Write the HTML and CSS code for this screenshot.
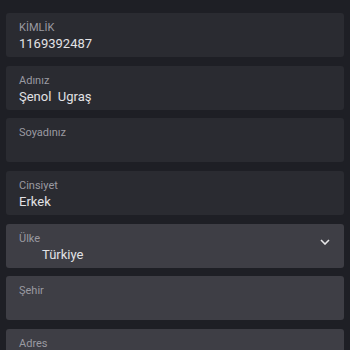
FILE: index.html
```html
<!DOCTYPE html>
<html lang="tr">
<head>
    <meta charset="UTF-8">
    <meta name="viewport" content="width=device-width, initial-scale=1.0">
    <title>Profil</title>
    <link rel="stylesheet" href="styles.css">
</head>
<body>
    <div class="form-list">
        <div class="field">
            <span class="label">KİMLİK</span>
            <span class="value">1169392487</span>
        </div>
        <div class="field">
            <span class="label">Adınız</span>
            <span class="value">Şenol&nbsp; Ugraş</span>
        </div>
        <div class="field">
            <span class="label">Soyadınız</span>
            <span class="value"></span>
        </div>
        <div class="field">
            <span class="label">Cinsiyet</span>
            <span class="value">Erkek</span>
        </div>
        <div class="field field-light field-select">
            <span class="label">Ülke</span>
            <span class="value value-indent">Türkiye</span>
            <svg class="chevron" width="10" height="6" viewBox="0 0 10 6">
                <path d="M1 1 L5 5 L9 1" fill="none" stroke="#e6e6e8" stroke-width="1.6"/>
            </svg>
        </div>
        <div class="field field-light">
            <span class="label">Şehir</span>
            <span class="value"></span>
        </div>
        <div class="field field-light">
            <span class="label">Adres</span>
            <span class="value"></span>
        </div>
    </div>
</body>
</html>
```

FILE: styles.css
```css
* {
    margin: 0;
    padding: 0;
    box-sizing: border-box;
}

body {
    font-family: Roboto, 'Noto Sans', sans-serif;
    background-color: #1e1f25;
    color: #e8e8ea;
    overflow: hidden;
}

/* List with its own thin scrollbar */
.form-list {
    width: 345px;
    height: 350px;
    overflow-y: scroll;
    display: flex;
    flex-direction: column;
    gap: 8.67px;
    padding: 13px 1px 39px 6px;
}

.form-list::-webkit-scrollbar {
    width: 4px;
}

.form-list::-webkit-scrollbar-track {
    background: #24252b;
}

.form-list::-webkit-scrollbar-thumb {
    background: #5a5a61;
}

/* Field cards */
.field {
    position: relative;
    flex: 0 0 44px;
    height: 44px;
    background-color: #2a2b31;
    border-radius: 3px;
    padding: 8px 13px 0;
    display: flex;
    flex-direction: column;
}

.field-light {
    background-color: #3e3e45;
}

.label {
    font-size: 11px;
    line-height: 13px;
    color: #9a9aa1;
}

.value {
    font-size: 13px;
    line-height: 16px;
    margin-top: 2px;
    color: #e2e2e5;
}

.value-indent {
    padding-left: 23px;
}

.chevron {
    position: absolute;
    right: 14px;
    top: 15px;
}
```
